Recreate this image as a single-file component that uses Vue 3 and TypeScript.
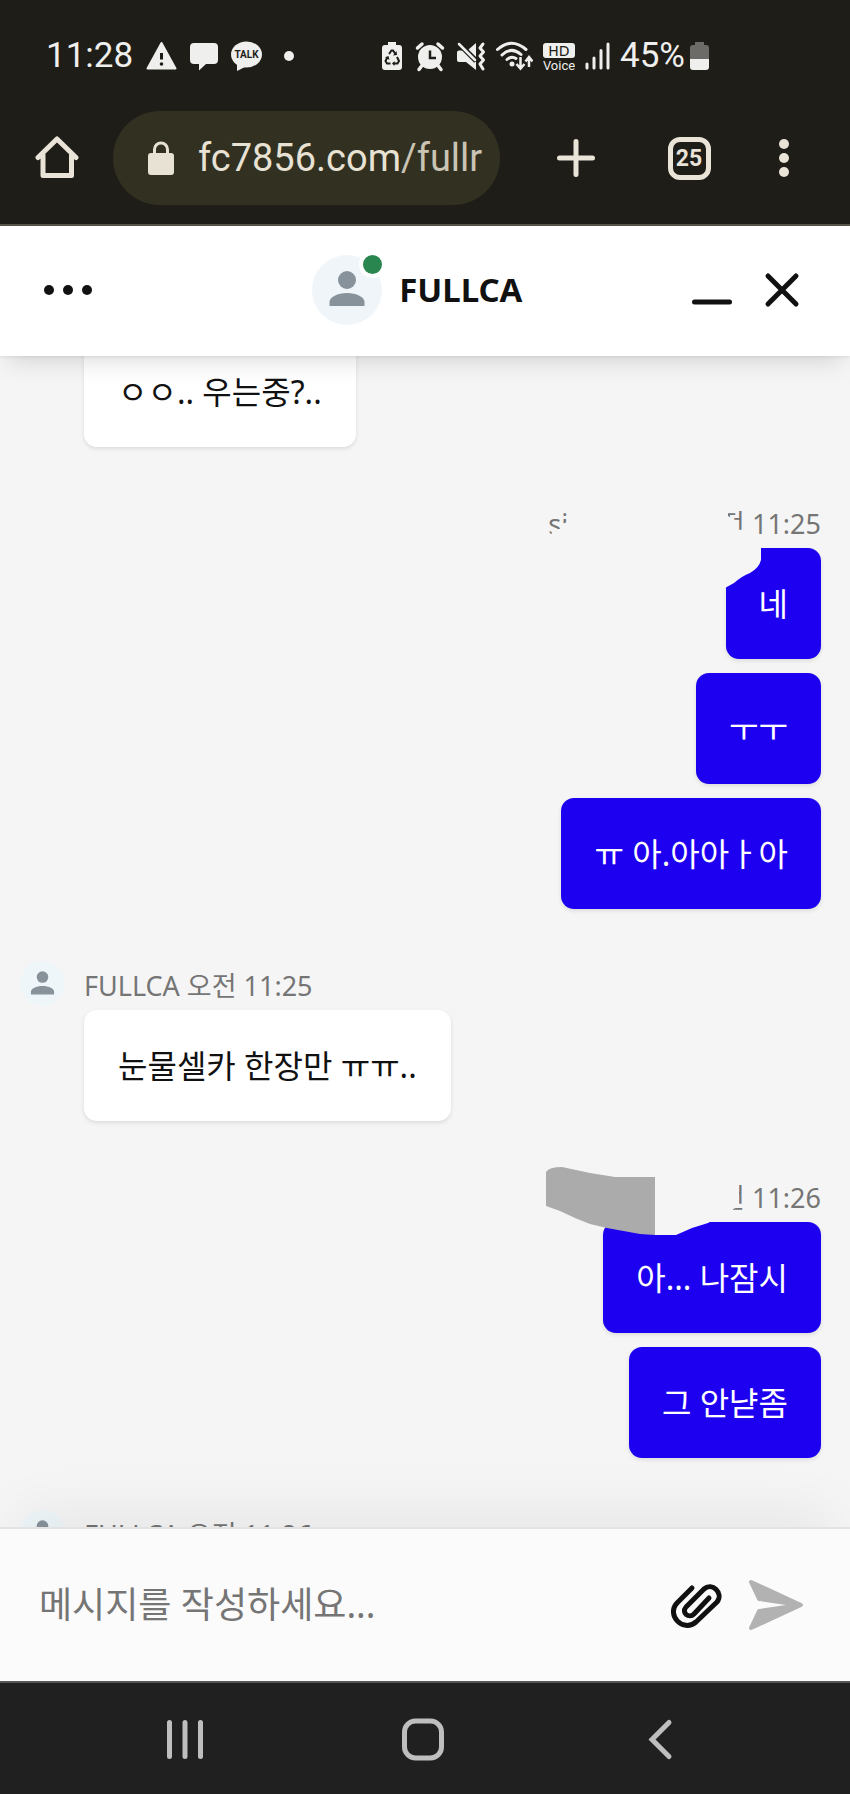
<script setup lang="ts">
import { ref } from 'vue'

interface MessageGroup {
  id: number
  mine: boolean
  author: string
  time: string
  cover: '' | 'brush' | 'patch'
  messages: string[]
}

const draft = ref('')

const groups: MessageGroup[] = [
  { id: 1, mine: false, author: '', time: '', cover: '', messages: ['ㅇㅇ.. 우는중?..'] },
  { id: 2, mine: true, author: 'si', time: '오전 11:25', cover: 'brush', messages: ['네', 'ㅜㅜ', 'ㅠ 아.아아ㅏ아'] },
  { id: 3, mine: false, author: 'FULLCA', time: '오전 11:25', cover: '', messages: ['눈물셀카 한장만 ㅠㅠ..'] },
  { id: 4, mine: true, author: '', time: '오전 11:26', cover: 'patch', messages: ['아... 나잠시', '그 안냗좀'] },
  { id: 5, mine: false, author: 'FULLCA', time: '오전 11:26', cover: '', messages: [] },
]
</script>

<template>
  <div class="phone">
    <div class="status">
      <div class="status-left">
        <span class="clock">11:28</span>
        <svg width="31" height="32" viewBox="0 0 31 32" aria-hidden="true">
          <path d="M15.500 3 29.500 28.500H1.500Z" fill="#efefed" stroke="#efefed" stroke-width="2" stroke-linejoin="round" />
          <path d="M15.500 13v6.500" stroke="#1f1d18" stroke-width="3" />
          <circle cx="15.500" cy="24" r="1.800" fill="#1f1d18" />
        </svg>
        <svg width="28" height="32" viewBox="0 0 28 32" aria-hidden="true">
          <path d="M4 3h20a4 4 0 0 1 4 4v13a4 4 0 0 1-4 4h-8l-7 6.500V24H4a4 4 0 0 1-4-4V7a4 4 0 0 1 4-4Z" fill="#efefed" />
        </svg>
        <svg width="31" height="32" viewBox="0 0 31 32" aria-hidden="true">
          <ellipse cx="15.500" cy="14.500" rx="15.500" ry="13" fill="#efefed" />
          <path d="M6 23v8l10-5Z" fill="#efefed" />
          <text x="15.500" y="18" text-anchor="middle" class="talk">TALK</text>
        </svg>
        <svg width="28" height="32" viewBox="0 0 28 32" aria-hidden="true"><circle cx="14" cy="16" r="5" fill="#efefed" /></svg>
      </div>
      <div class="status-right">
        <svg width="24" height="32" viewBox="0 0 24 32" aria-hidden="true">
          <path d="M8 2h8v3h3a3 3 0 0 1 3 3v19a3 3 0 0 1-3 3H5a3 3 0 0 1-3-3V8a3 3 0 0 1 3-3h3Z" fill="#efefed" />
          <path d="m9 14 2.500-3.500h1.500l2.500 3.500M17 17l2 4-1.500 2.500H13.500M10.500 23.500H7L5.500 21l2-4" fill="none" stroke="#1f1d18" stroke-width="2" />
          <path d="m13 15.500 4-.5-.5-4ZM14.500 21v5L12 23.500ZM5 17.500l3.500-1.500 1 4Z" fill="#1f1d18" />
        </svg>
        <svg width="32" height="32" viewBox="0 0 32 32" aria-hidden="true">
          <circle cx="16" cy="17" r="12" fill="#efefed" />
          <path d="M3.500 8 8 4M28.500 8 24 4M8 25.500l-3 4M24 25.500l3 4" stroke="#efefed" stroke-width="3.500" stroke-linecap="round" />
          <path d="M16 10.500V18h6" fill="none" stroke="#1f1d18" stroke-width="2.500" />
        </svg>
        <svg width="30" height="32" viewBox="0 0 30 32" aria-hidden="true">
          <path d="M3 10.500h5L20 22v8l-10-8H3Q1 22 1 20V12.500Q1 10.500 3 10.500ZM20 3v14L12.500 9.500Z" fill="#efefed" />
          <path d="m3 4 17 17" stroke="#1f1d18" stroke-width="5" />
          <path d="m3 4 16 16" stroke="#efefed" stroke-width="2.500" stroke-linecap="round" />
          <path d="m27 4-3 4 3.500 4-3.500 4 3.500 4-3.500 4 3 5" fill="none" stroke="#efefed" stroke-width="3" stroke-linejoin="round" stroke-linecap="round" />
        </svg>
        <svg width="37" height="32" viewBox="0 0 37 32" aria-hidden="true">
          <path d="M1.500 9.500Q15.500-3 30 9.500M6 15Q15.500 6 25 14.500M11 19.500Q15.500 15.500 20 18.500" fill="none" stroke="#efefed" stroke-width="3" stroke-linecap="round" />
          <circle cx="16" cy="24" r="2.500" fill="#efefed" />
          <path d="M24.500 17v11m-4-4 4 4.500 4-4.500M33 27V17.500m-3.500 4 3.500-4.500 3.500 4.500" fill="none" stroke="#efefed" stroke-width="2.500" />
        </svg>
        <svg width="32" height="32" viewBox="0 0 32 32" aria-hidden="true">
          <rect x="0" y="3" width="32" height="15" rx="3" fill="#efefed" />
          <text x="16" y="16" text-anchor="middle" class="hd">HD</text>
          <text x="16" y="30" text-anchor="middle" class="voice">Voice</text>
        </svg>
        <svg width="25" height="32" viewBox="0 0 25 32" aria-hidden="true">
          <path d="M2 24v4M9 18v10M16 10.500V28M23 4v24" stroke="#efefed" stroke-width="3" stroke-linecap="round" />
        </svg>
        <span class="battery">
          <span>45%</span>
          <svg width="19" height="32" viewBox="0 0 19 32" aria-hidden="true">
            <path d="M5 2h9v3h2a3 3 0 0 1 3 3v11H0V8a3 3 0 0 1 3-3h2Z" fill="#6c6b68" />
            <path d="M0 19h19v8a3 3 0 0 1-3 3H3a3 3 0 0 1-3-3Z" fill="#efefed" />
          </svg>
        </span>
      </div>
    </div>

    <div class="browser">
      <button class="tool home" type="button" aria-label="홈">
        <svg width="44" height="44" viewBox="0 0 44 44">
          <path d="m3 21.500 19-18.500 19 18.500M8 19v20.500h28.500V19" fill="none" stroke="#e9e3d8" stroke-width="5" stroke-linejoin="round" stroke-linecap="round" />
        </svg>
      </button>
      <button class="address" type="button">
        <svg width="26" height="34" viewBox="0 0 26 34" aria-hidden="true">
          <rect x="0" y="12" width="26" height="22" rx="3" fill="#e7e2d4" />
          <path d="M6.500 13V8.500a6.500 6.500 0 0 1 13 0V13" fill="none" stroke="#e7e2d4" stroke-width="3" />
        </svg>
        <span class="url">fc7856.com<span class="path">/fullr</span></span>
      </button>
      <div class="tools">
        <button class="tool" type="button" aria-label="새 탭">
          <svg width="44" height="44" viewBox="0 0 44 44"><path d="M22 5.500v33M5.500 22h33" stroke="#e9e3d8" stroke-width="5" stroke-linecap="round" /></svg>
        </button>
        <button class="tool tabs" type="button" aria-label="탭 25개"><span class="tab-count">25</span></button>
        <button class="tool" type="button" aria-label="메뉴">
          <svg width="44" height="44" viewBox="0 0 44 44" fill="#e9e3d8"><circle cx="22" cy="8" r="5" /><circle cx="22" cy="22" r="5" /><circle cx="22" cy="36" r="5" /></svg>
        </button>
      </div>
    </div>

    <header class="chat-head">
      <button class="icon-btn" type="button" aria-label="옵션">
        <svg width="48" height="48" viewBox="0 0 48 48" fill="#111"><circle cx="5" cy="24" r="5" /><circle cx="24" cy="24" r="5" /><circle cx="43" cy="24" r="5" /></svg>
      </button>
      <div class="who">
        <span class="avatar">
          <svg width="70" height="70" viewBox="0 0 70 70" aria-hidden="true">
            <circle cx="35" cy="35" r="35" fill="#f0f5f9" />
            <circle cx="35" cy="25" r="9" fill="#88929b" />
            <path d="M17.500 51v-4c0-5 8-9 17.500-9s17.500 4 17.500 9v4Z" fill="#88929b" />
          </svg>
          <span class="online"></span>
        </span>
        <h1>FULLCA</h1>
      </div>
      <div class="head-actions">
        <button class="icon-btn" type="button" aria-label="최소화">
          <svg width="44" height="44" viewBox="0 0 44 44"><path d="M4.500 34h35" stroke="#111" stroke-width="5" stroke-linecap="round" /></svg>
        </button>
        <button class="icon-btn" type="button" aria-label="닫기">
          <svg width="44" height="44" viewBox="0 0 44 44"><path d="m8 8 28 28M36 8 8 36" stroke="#111" stroke-width="5" stroke-linecap="round" /></svg>
        </button>
      </div>
    </header>

    <main class="thread">
      <section v-for="g in groups" :key="g.id" class="group" :class="{ mine: g.mine }">
        <div v-if="!g.mine" class="side">
          <svg v-if="g.author" width="45" height="45" viewBox="0 0 70 70" aria-hidden="true">
            <circle cx="35" cy="35" r="35" fill="#eff6fa" />
            <circle cx="35" cy="25" r="9" fill="#88929b" />
            <path d="M17 52v-4c0-5 8-9 18-9s18 4 18 9v4Z" fill="#88929b" />
          </svg>
        </div>
        <div class="body">
          <p v-if="g.time" class="meta">
            <span v-if="g.author" class="author">{{ g.author }}</span>
            <span>{{ g.time }}</span>
          </p>
          <p v-for="m in g.messages" :key="m" class="bubble">{{ m }}</p>
          <svg v-if="g.cover === 'brush'" class="cover" width="280" height="90" viewBox="541 505 280 90" aria-hidden="true">
            <path d="M552 534 551 529 560 529 561 524 568 522V505H728V516L736 521V533L741 531H746V546H761V560Q759 568 750 573 742 576 734 583L725 588H700V546H552Z" fill="#f5f5f5" />
          </svg>
          <svg v-if="g.cover === 'patch'" class="cover" width="280" height="90" viewBox="541 1178 280 90" aria-hidden="true">
            <path d="M655 1176H739V1206L733 1208V1218H715L708 1222 692 1227 676 1234H655Z" fill="#f5f5f5" />
            <path d="M546 1171Q549 1166 562 1166L590 1172 615 1176H655V1234L640 1233 607 1227 590 1223 575 1217 560 1210 546 1205Z" fill="#ababab" />
          </svg>
        </div>
      </section>
    </main>

    <form class="composer" @submit.prevent>
      <input v-model="draft" type="text" aria-label="메시지" placeholder="메시지를 작성하세요..." />
      <button class="icon-btn" type="button" aria-label="파일 첨부">
        <svg width="54" height="54" viewBox="0 0 54 54">
          <path d="M22 10 7 25C-4 37 13 55 26 44L47 24C54 15 42 4 34 11L16 29C11 35 19 41 24 36L39 20" fill="none" stroke="#111" stroke-width="5" stroke-linecap="round" stroke-linejoin="round" />
        </svg>
      </button>
      <button class="icon-btn" type="submit" aria-label="보내기">
        <svg width="56" height="54" viewBox="0 0 56 54">
          <path d="M3 4 53 27 3 50 11 33 37 27 11 21Z" fill="#b2b2b2" stroke="#b2b2b2" stroke-width="4" stroke-linejoin="round" />
          <path d="M11 23 38 27 11 31Z" fill="#fbfbfb" />
        </svg>
      </button>
    </form>

    <nav class="system">
      <button type="button" aria-label="최근 앱">
        <svg width="44" height="44" viewBox="0 0 44 44"><path d="M6.500 5.500v34M22 5.500v34M37.500 5.500v34" stroke="#bebebe" stroke-width="5" stroke-linecap="round" /></svg>
      </button>
      <button type="button" aria-label="홈 화면">
        <svg width="44" height="44" viewBox="0 0 44 44"><rect x="3.500" y="4" width="37" height="37" rx="11" fill="none" stroke="#bebebe" stroke-width="5" /></svg>
      </button>
      <button type="button" aria-label="뒤로">
        <svg width="44" height="44" viewBox="0 0 44 44"><path d="M30 5.500 13 22.500l17 17" fill="none" stroke="#bebebe" stroke-width="5" stroke-linecap="round" /></svg>
      </button>
    </nav>
  </div>
</template>

<style>
body {
  margin: 0;
}
</style>

<style scoped>
.phone {
  height: 100vh;
  display: flex;
  flex-direction: column;
  overflow: hidden;
  background: #f5f5f5;
  color: #111;
  font-family: "Noto Sans", "Noto Sans CJK KR", sans-serif;
}
button {
  border: 0;
  padding: 0;
  background: none;
  font: inherit;
  color: inherit;
  display: flex;
  align-items: center;
  justify-content: center;
}
svg {
  display: block;
  flex: none;
}
.status {
  flex: none;
  height: 111px;
  padding: 0 141px 0 46px;
  display: flex;
  justify-content: space-between;
  align-items: center;
  background: #1f1d18;
  color: #efefed;
  font: 35px/40px Roboto, sans-serif;
}
.status-left {
  display: flex;
  align-items: center;
  gap: 13px;
}
.status-right {
  display: flex;
  align-items: center;
  gap: 10px;
}
.battery {
  display: flex;
  align-items: center;
  gap: 5px;
}
.talk {
  font: 700 10px Roboto, sans-serif;
  fill: #1f1d18;
}
.hd {
  font: 14px "DejaVu Sans", sans-serif;
  fill: #1f1d18;
}
.voice {
  font: 13px Roboto, sans-serif;
  fill: #efefed;
}
.browser {
  flex: none;
  display: flex;
  align-items: center;
  padding: 0 44px 19px 35px;
  border-bottom: 2px solid #57544a;
  background: #1f1d18;
}
.tool {
  width: 44px;
  height: 44px;
}
.home {
  margin-right: 34px;
}
.address {
  flex: 1;
  min-width: 0;
  height: 94px;
  padding: 0 14px 0 35px;
  gap: 24px;
  justify-content: flex-start;
  border-radius: 47px;
  background: #323021;
  color: #e7e2d4;
}
.url {
  flex: 1;
  min-width: 0;
  overflow: hidden;
  white-space: nowrap;
  text-align: left;
  font: 38px/48px Roboto, sans-serif;
}
.path {
  color: #c9c4b4;
}
.tools {
  flex: none;
  width: 252px;
  margin-left: 54px;
  display: flex;
  justify-content: space-between;
}
.tabs {
  margin-left: 18px;
}
.tab-count {
  box-sizing: border-box;
  width: 43px;
  height: 43px;
  border: 5px solid #e9e3d8;
  border-radius: 12px;
  color: #e9e3d8;
  text-align: center;
  font: 700 23px/33px Roboto, sans-serif;
}
.chat-head {
  position: relative;
  z-index: 2;
  flex: none;
  box-sizing: border-box;
  height: 130px;
  padding: 0 46px 2px 44px;
  display: grid;
  grid-template-columns: 20fr auto 21fr;
  align-items: center;
  background: #fff;
  box-shadow: 0 12px 24px -8px rgba(0, 0, 0, 0.15), 0 1px 3px rgba(0, 0, 0, 0.08);
}
.chat-head > .icon-btn {
  justify-self: start;
}
.who {
  display: flex;
  align-items: center;
  gap: 17px;
}
.avatar {
  position: relative;
}
.online {
  position: absolute;
  top: -4px;
  right: -4px;
  width: 19px;
  height: 19px;
  border: 4px solid #fff;
  border-radius: 50%;
  background: #29864e;
}
h1 {
  margin: 0;
  font-size: 33px;
  line-height: 44px;
  font-weight: 700;
}
.head-actions {
  justify-self: end;
  display: flex;
  gap: 26px;
}
.thread {
  flex: 1;
  min-height: 0;
  overflow: hidden;
  display: flex;
  flex-direction: column;
  gap: 58px;
  margin-top: -20px;
}
.group {
  flex: none;
  display: flex;
  gap: 19px;
  padding: 0 29px 0 20px;
}
.side {
  width: 45px;
  margin-top: -6px;
}
.body {
  flex: 1;
  position: relative;
  display: flex;
  flex-direction: column;
  align-items: flex-start;
}
.mine .body {
  align-items: flex-end;
}
.meta {
  margin: 0;
  padding-bottom: 5px;
  display: flex;
  gap: 7px;
  font-size: 27px;
  line-height: 38px;
  color: #757575;
}
.mine .author {
  width: 140px;
}
.bubble {
  margin: 0;
  padding: 34px;
  border-radius: 13px;
  background: #fff;
  box-shadow: 0 2px 4px rgba(0, 0, 0, 0.1);
  font-size: 32px;
  line-height: 43px;
}
.bubble + .bubble {
  margin-top: 14px;
}
.mine .bubble {
  padding: 34px 33px;
  background: #1e00f0;
  color: #fff;
}
.cover {
  position: absolute;
  top: 0;
  right: 0;
  overflow: visible;
}
.composer {
  position: relative;
  z-index: 2;
  flex: none;
  height: 152px;
  padding: 0 46px 0 39px;
  display: flex;
  align-items: center;
  gap: 24px;
  border-top: 2px solid #e3e3e3;
  background: #fbfbfb;
  box-shadow: 0 -32px 56px -16px rgba(0, 0, 0, 0.06);
}
.composer input {
  flex: 1;
  min-width: 0;
  padding: 0;
  border: 0;
  outline: 0;
  background: transparent;
  color: #111;
  font: inherit;
  font-size: 36px;
  line-height: 52px;
}
.composer input::placeholder {
  color: #757575;
  opacity: 1;
}
.system {
  flex: none;
  height: 111px;
  padding: 0 70px 0 66px;
  display: flex;
  border-top: 2px solid #555;
  background: #202020;
}
.system button {
  flex: 1;
}
</style>
